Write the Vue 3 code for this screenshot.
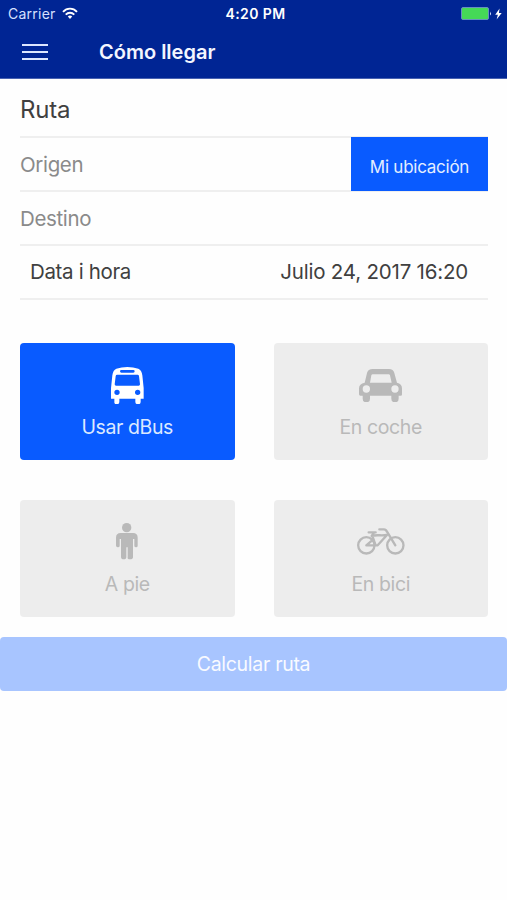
<script setup>
const modes = [
  { id: 'bus', label: 'Usar dBus', active: true },
  { id: 'car', label: 'En coche' },
  { id: 'walk', label: 'A pie' },
  { id: 'bike', label: 'En bici' },
]
</script>

<template>
  <main class="screen">
    <header class="top">
      <div class="status">
        <div class="carrier">
          <span>Carrier</span>
          <svg class="wifi" viewBox="0 0 16 13" fill="none" stroke="currentColor" stroke-width="1.9">
            <path d="M1 4.8C5 .6 11 .6 15 4.8M3.7 7.6c2.5-2.5 6.1-2.5 8.6 0" />
            <path d="M5.8 9.5c1.3-1.2 3.1-1.2 4.4 0L8 11.9z" fill="currentColor" stroke="none" />
          </svg>
        </div>
        <span class="clock">4:20 PM</span>
        <div class="power">
          <svg class="battery" viewBox="0 0 31 13">
            <rect x=".5" y=".5" width="27" height="12" rx="1.5" fill="#45d957" stroke="#668fc0" />
            <path d="M29 4.5q1.8 2 0 4z" fill="#dce5ff" />
          </svg>
          <svg class="bolt" viewBox="0 0 7 12"><path d="M4.6.5L.2 6.7h2.7L1.6 11.5l5.1-6.6H3.9z" fill="#fff" /></svg>
        </div>
      </div>
      <nav class="nav">
        <button class="menu" aria-label="Menú"><i></i><i></i><i></i></button>
        <h1>Cómo llegar</h1>
      </nav>
    </header>

    <section class="form">
      <h2 class="row">Ruta</h2>
      <div class="row field">
        <span>Origen</span>
        <button class="locate">Mi ubicación</button>
      </div>
      <div class="row field"><span>Destino</span></div>
      <div class="row date"><span class="date-label">Data i hora</span><span class="date-value">Julio 24, 2017 16:20</span></div>
    </section>

    <section class="modes">
      <button v-for="mode in modes" :key="mode.id" class="mode" :class="[mode.id, { active: mode.active }]">
        <span class="icon">
          <svg v-if="mode.id === 'bus'" viewBox="302 95 98 112" fill="currentColor" fill-rule="evenodd">
            <path d="M306 120Q308 104 318 100Q333 95 351 95T384 100Q394 104 396 120L400 158V190H391V199Q391 207 383 207T375 199V190H327V199Q327 207 319 207T312 199V190H302V158ZM333 104Q329 104 329 108T333 112H369Q373 112 373 108T369 104ZM320 118Q317 118 316 122L313 147Q313 151 317 151H385Q389 151 389 147L386 122Q385 118 382 118ZM320 163A8 8 0 1 0 320 179A8 8 0 1 0 320 163ZM382 163A8 8 0 1 0 382 179A8 8 0 1 0 382 163Z" />
          </svg>
          <svg v-else-if="mode.id === 'car'" viewBox="296 102 129 100" fill="currentColor" fill-rule="evenodd">
            <path d="M313 143L320 114Q323 102 337 102H386Q399 102 402 114L410 143Q425 146 425 160V179Q425 182 421 182H415V191Q415 202 404 202T393 191V182H329V191Q329 202 318 202T307 191V182H300Q296 182 296 178V160Q296 146 313 143ZM337 118Q334 118 333 121L329 143H394L389 121Q388 118 385 118ZM318 151A11 11 0 1 0 318 173A11 11 0 1 0 318 151ZM404 151A11 11 0 1 0 404 173A11 11 0 1 0 404 151Z" />
          </svg>
          <svg v-else-if="mode.id === 'walk'" viewBox="319 101 65 109" fill="currentColor">
            <circle cx="351" cy="115" r="14" />
            <path d="M333 131H370Q384 131 384 145V169Q384 174 379 174T374 169V149H370V203Q370 210 361 210T354 203V174H350V203Q350 210 342 210T334 203V149H330V169Q330 174 325 174T319 169V145Q319 131 333 131Z" />
          </svg>
          <svg v-else viewBox="289 114 144 81" fill="none" stroke="currentColor" stroke-width="7" stroke-linecap="round" stroke-linejoin="round">
            <circle cx="317" cy="166" r="24.5" />
            <circle cx="404" cy="166" r="24.5" />
            <path d="M324 127H345M340 128L333 138M333 138C348 133 360 138 378 135M335 138L345 166M317 166H351L379 135M317 166L337 149M356 118H370Q376 118 379 125L404 166" />
          </svg>
        </span>
        <span class="label">{{ mode.label }}</span>
      </button>
    </section>

    <button class="submit">Calcular ruta</button>
  </main>
</template>

<style>
body { margin: 0; background: #fff; }
</style>

<style scoped>
.screen { min-height: 900px; background: #fefefe; font-family: Inter, "Liberation Sans", sans-serif; color: #404040; }
button { border: 0; padding: 0; margin: 0; font: inherit; color: inherit; }
h1, h2 { margin: 0; font-weight: 400; }
svg { display: block; }
.top { height: 79px; box-sizing: border-box; background: #002594; border-bottom: 1px solid #4862b1; color: #fff; }
.status { height: 27px; display: grid; grid-template-columns: 1fr auto 1fr; align-items: center; padding: 0 5px 0 8px; font-size: 14px; }
.carrier { display: flex; align-items: center; gap: 6px; color: #d6e0ff; letter-spacing: .25px; }
.wifi { width: 16px; height: 13px; color: #fff; margin-top: -1px; }
.clock { font-weight: 600; letter-spacing: .4px; padding-left: 1px; }
.power { display: flex; justify-content: flex-end; align-items: center; gap: 3px; }
.battery { width: 31px; height: 13px; }
.bolt { width: 7px; height: 12px; }
.nav { height: 49px; display: flex; align-items: center; padding-left: 22px; gap: 51px; }
.menu { width: 26px; display: flex; flex-direction: column; gap: 5px; background: none; }
.menu i { height: 2px; background: #dce6ff; }
h1 { font-size: 20px; font-weight: 600; color: #f3f6ff; }
.form { padding: 4px 19px 0 20px; }
.row { height: 54.2px; box-sizing: border-box; border-bottom: 2px solid #efefef; display: flex; align-items: center; justify-content: space-between; font-size: 20.5px; letter-spacing: -.35px; }
h2.row { height: 54.5px; font-size: 24px; padding: 0; letter-spacing: -.2px; }
.field { padding-top: 1px; color: #8a8a8a; }
.field > span { padding-top: 1px; }
.locate { width: 137px; height: 54px; padding-top: 6px; box-sizing: border-box; background: #095bff; color: #e4eeff; font-size: 17px; letter-spacing: -.25px; flex: none; }
.date { padding: 0 20px 0 10px; }
.date-value { letter-spacing: -.2px; }
.modes { display: grid; grid-template-columns: 1fr 1fr; gap: 39.4px 39px; padding: 43.2px 19px 0 20px; }
.mode { height: 117px; border-radius: 4px; background: #ededed; color: #b9b9b9; display: flex; flex-direction: column; align-items: center; }
.mode.active { background: #095bff; color: #fff; }
.icon { height: 70px; display: flex; align-items: center; padding-top: 14px; box-sizing: border-box; }
.bus svg { width: 32.7px; height: 37.3px; }
.car svg { width: 43px; height: 33.3px; }
.walk svg { width: 21.7px; height: 36.3px; }
.bike svg { width: 48px; height: 27px; }
.label { font-size: 19.5px; line-height: 28px; letter-spacing: -.4px; }
.active .label { color: #dce9ff; }
.submit { display: block; width: 100%; height: 54px; margin-top: 20px; border-radius: 4px; background: #a8c5ff; color: #f8faff; font-size: 19.5px; letter-spacing: -.3px; }
</style>
